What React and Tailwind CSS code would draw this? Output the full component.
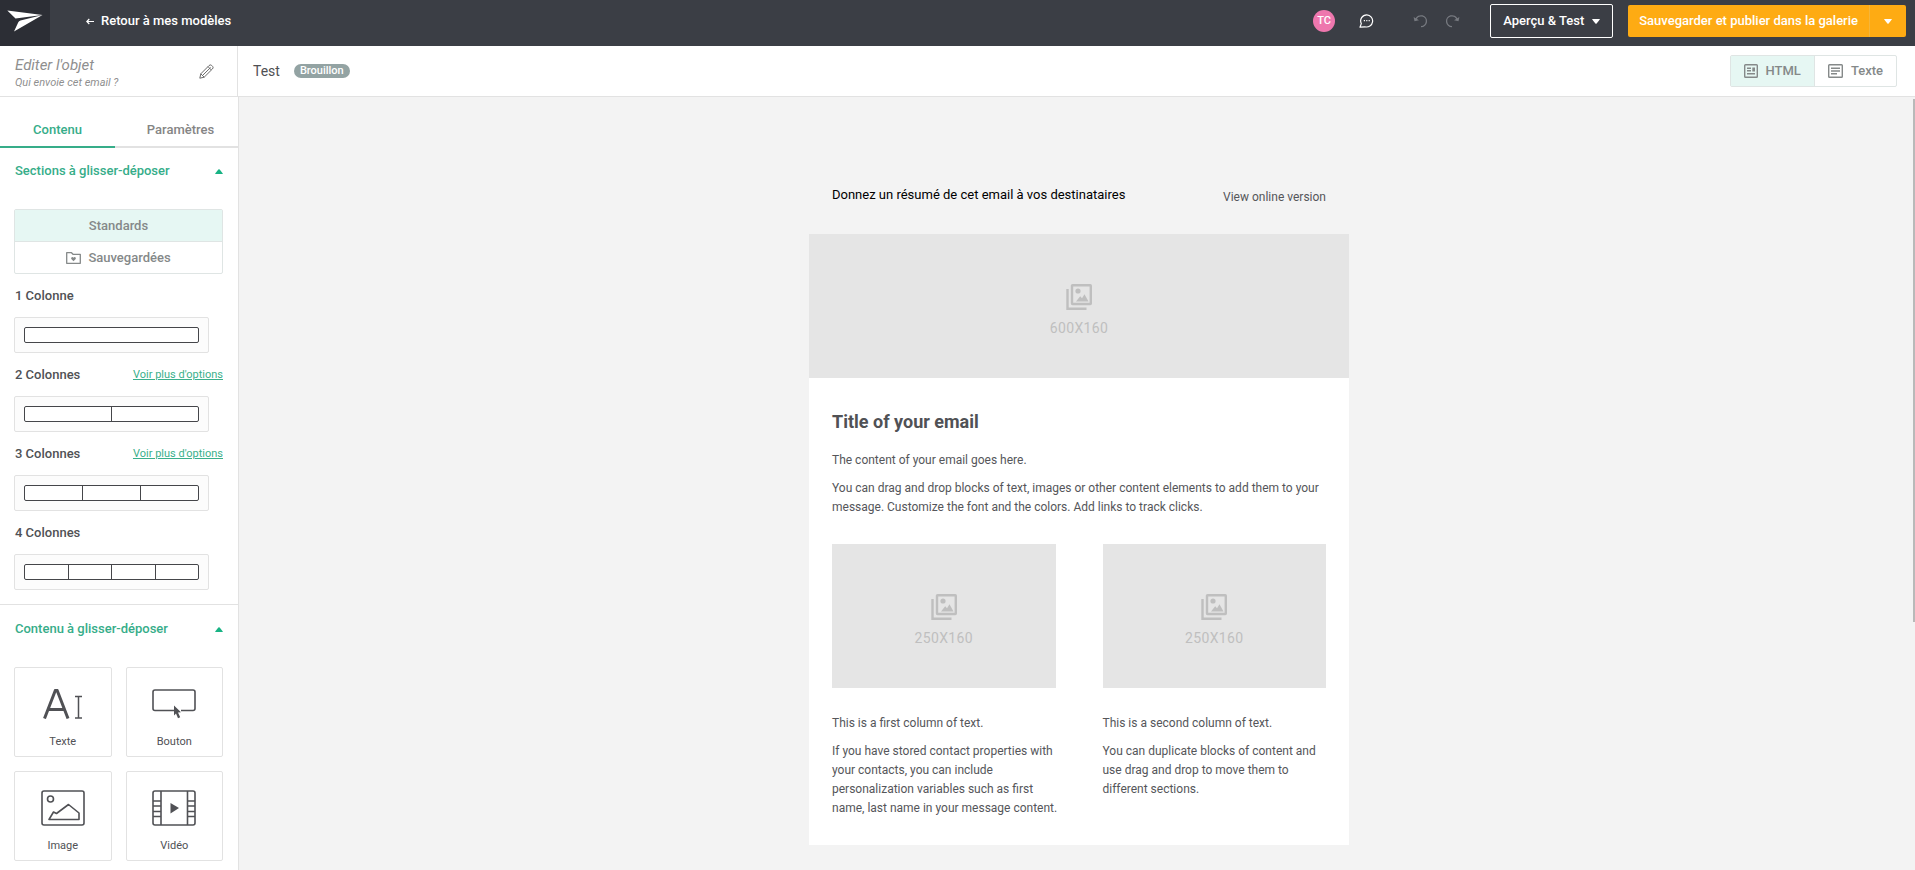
import React from "react";

const caretUp = (
  <svg width="8" height="5" viewBox="0 0 8 5" aria-hidden="true" fill="currentColor">
    <path d="M0.3 5Q0 5 .4 4.300L3.300 .6Q4 0 4.700 .6L7.600 4.300Q8 5 7.700 5Z" />
  </svg>
);

function CaretDown({ className = "" }) {
  return (
    <svg className={className} width="8" height="5" viewBox="0 0 8 5" aria-hidden="true" fill="currentColor">
      <path d="M0.3 0H7.7Q8 .3 7.6 .8L4.6 4.5Q4 5 3.4 4.5L.4 .8Q0 .3 .3 0Z" />
    </svg>
  );
}

function UndoIcon({ className = "" }) {
  return (
    <svg className={className} width="15" height="14" viewBox="0 0 15 14" fill="none" stroke="currentColor" strokeWidth="1.3" aria-hidden="true">
      <path d="M3 5.2A5.4 5.4 0 1 1 8 12.6" />
      <path d="M0.6 2.9 1.5 7.2 6 6.2Z" fill="currentColor" stroke="none" />
    </svg>
  );
}

function ImageStack() {
  return (
    <svg width="26" height="26" viewBox="0 0 26 26" fill="none" stroke="currentColor" strokeWidth="2.400" aria-hidden="true">
      <rect x="6" y="1.200" width="18.800" height="18.800" rx="0.5" />
      <path d="M1.500 5V24.800H20.500" />
      <circle cx="12" cy="7" r="2.6" fill="currentColor" stroke="none" />
      <path d="M10 17.500 14.200 12.300 16 14.300 18.500 10.300 22.500 17.500Z" fill="currentColor" stroke="none" />
    </svg>
  );
}

function Placeholder({ label }) {
  return (
    <div className="flex h-36 flex-col items-center justify-center gap-2 bg-[#e5e5e5] pt-[10px] text-[#bfbfbf]">
      <ImageStack />
      <span className="text-sm leading-5 tracking-wide">{label}</span>
    </div>
  );
}

function Header() {
  return (
    <header className="flex h-[46px] items-stretch bg-[#3b3e45] text-white">
      <a href="#accueil" aria-label="Accueil" className="flex w-[50px] justify-center bg-[#2c2e35] pt-[10px]">
        <svg width="36" height="22" viewBox="0 0 36 22" fill="#fff" aria-hidden="true">
          <path d="M0.300 0.500 35.500 5 18 7.200 8.500 8.500Z" />
          <path d="M35.500 5 7 21.500 11.300 12.300Q11.800 11 13.500 10.500Z" />
        </svg>
      </a>
      <div className="flex flex-1 items-center justify-between pr-[9px] pb-1 pl-9">
        <a href="#modeles" className="flex items-center gap-[7px] text-[13px] font-medium">
          <svg width="8" height="7" viewBox="0 0 8 7" fill="none" stroke="currentColor" strokeWidth="1.200" aria-hidden="true">
            <path d="M8 3.500H1M3.300 1 .8 3.500 3.300 6" />
          </svg>
          Retour à mes modèles
        </a>
        <div className="flex items-center">
          <span className="flex size-[22px] items-center justify-center rounded-full bg-[#ee77ae] text-[11px] font-medium">TC</span>
          <button type="button" aria-label="Commentaires" className="ml-6">
            <svg width="15" height="14" viewBox="0 0 15 14" fill="none" stroke="currentColor" strokeWidth="1.200" aria-hidden="true">
              <path d="M7.800 .8A6.100 6.100 0 1 1 6 12.800L1 13.200 2.300 9.600A6.100 6.100 0 0 1 7.800 .8Z" strokeLinejoin="round" />
              <path d="M4.800 6.600h1.200M7.200 6.600h1.200M9.600 6.600h1.200" />
            </svg>
          </button>
          <button type="button" aria-label="Annuler" className="ml-[39px] text-[#777a80]"><UndoIcon /></button>
          <button type="button" aria-label="Rétablir" className="ml-[17px] text-[#777a80]"><UndoIcon className="-scale-x-100" /></button>
          <button type="button" className="ml-[30px] flex h-[34px] items-center gap-2 rounded-[2px] border border-white px-3 text-[13px] font-medium">
            Aperçu &amp; Test
            <CaretDown />
          </button>
          <div className="ml-[15px] flex h-8 overflow-hidden rounded-[2px] bg-[#feab13] text-[13px] font-medium">
            <button type="button" className="px-[11px]">Sauvegarder et publier dans la galerie</button>
            <button type="button" aria-label="Autres options" className="flex w-[37px] items-center justify-center border-l border-[#f5b53a]">
              <CaretDown />
            </button>
          </div>
        </div>
      </div>
    </header>
  );
}

function TitleBar() {
  return (
    <div className="flex h-[51px] border-b border-[#e2e2e2] bg-white">
      <div className="flex w-[238px] items-center justify-between border-r border-[#e2e2e2] pr-[23px] pl-[15px]">
        <div className="pt-[3px] text-[#8f8f8f] italic">
          <p className="text-[15px] leading-5">Editer l'objet</p>
          <p className="text-[11px] leading-4">Qui envoie cet email ?</p>
        </div>
        <button type="button" aria-label="Modifier l'objet" className="text-[#6b6b6b]">
          <svg width="15" height="15" viewBox="0 0 15 15" fill="none" stroke="currentColor" strokeWidth="1" strokeLinejoin="round" aria-hidden="true">
            <path d="M.8 14.200 1.800 9.800 10 1.600Q11.200 .3 12.500 1.300L13.700 2.500Q14.700 3.800 13.400 5L5.200 13.200Z" />
            <path d="M1.800 9.800 5.200 13.200M3.600 11.400 11.600 3.500M9 2.600 12.400 6" />
          </svg>
        </button>
      </div>
      <div className="flex flex-1 items-center justify-between pr-[18px] pl-[15px]">
        <div className="flex items-center gap-[14px]">
          <h1 className="text-sm text-[#4f5054]">Test</h1>
          <span className="rounded-full bg-[#93a3a3] px-[6px] text-[11px] leading-[14px] font-medium text-white">Brouillon</span>
        </div>
        <div className="flex h-8 rounded-[2px] border border-[#dfe5e4] text-[13px] font-medium text-[#858989]">
          <button type="button" className="flex items-center gap-2 border-r border-[#dfe5e4] bg-[#e6f7f3] px-[13px]">
            <svg width="14" height="14" viewBox="0 0 14 14" fill="none" stroke="currentColor" strokeWidth="1.400" aria-hidden="true">
              <rect x=".7" y=".7" width="12.600" height="12.600" rx=".8" />
              <path d="M3 4.200h4M3 6.800h4M3 9.800h8" />
              <path d="M8.300 3.500h2.700v4h-2.700z" fill="currentColor" stroke="none" />
            </svg>
            HTML
          </button>
          <button type="button" className="flex items-center gap-2 px-[13px]">
            <svg width="15" height="14" viewBox="0 0 15 14" fill="none" stroke="currentColor" strokeWidth="1.400" aria-hidden="true">
              <rect x=".7" y=".7" width="13.600" height="12.600" rx=".8" />
              <path d="M3 4.200h9M3 7h9M3 9.800h6" />
            </svg>
            Texte
          </button>
        </div>
      </div>
    </div>
  );
}

function LayoutRow({ title, columns, more }) {
  return (
    <div className="mb-3 flex flex-col gap-[11px]">
      <div className="flex h-5 items-center justify-between pl-px text-[#505155]">
        <h3 className="text-[13px] font-medium">{title}</h3>
        {more && <a href="#options" className="text-[11px] text-[#3aaf8b] underline">Voir plus d'options</a>}
      </div>
      <button type="button" aria-label={title} className="mr-[14px] rounded-[2px] border border-[#e2e2e2] bg-[#fcfcfc] px-[9px] py-[9px]">
        <span className="flex h-4 divide-x divide-[#45464a] rounded-[2px] border border-[#45464a] bg-white">
          {Array.from({ length: columns }, (_, i) => (
            <span key={i} className="flex-1" />
          ))}
        </span>
      </button>
    </div>
  );
}

function Tile({ label, children }) {
  return (
    <button type="button" className="flex h-[90px] flex-col items-center rounded-[2px] border border-[#e2e2e2] bg-white pt-[18px] text-[#505155]">
      <span className="flex h-9 items-center">{children}</span>
      <span className="mt-3 text-[11px] leading-4">{label}</span>
    </button>
  );
}

function SectionTitle({ children }) {
  return (
    <button type="button" className="flex h-5 w-full items-center justify-between pl-px text-[13px] font-medium text-[#36ad89]">
      {children}
      <span className="text-[#18b384]">{caretUp}</span>
    </button>
  );
}

function Sidebar() {
  return (
    <aside className="w-[239px] shrink-0 border-r border-[#e2e2e2] bg-white">
      <nav className="flex pt-4 text-[13px] font-medium">
        <button type="button" className="h-[35px] w-[115px] border-b-2 border-[#36ad89] pt-px text-[#36ad89]">Contenu</button>
        <button type="button" className="h-[35px] flex-1 border-b-2 border-[#e2e2e2] pt-px pl-2 text-[#858585]">Paramètres</button>
      </nav>
      <section className="border-b border-[#e2e2e2] pt-[13px] pr-[15px] pb-[2px] pl-[14px]">
        <SectionTitle>Sections à glisser-déposer</SectionTitle>
        <div className="mt-7 mb-3 flex flex-col rounded-[2px] border border-[#dfe5e4] text-[13px] font-medium text-[#858989]">
          <button type="button" className="h-8 border-b border-[#dfe5e4] bg-[#e6f7f3]">Standards</button>
          <button type="button" className="flex h-[31px] items-center justify-center gap-[7px]">
            <svg width="15" height="12" viewBox="0 0 15 12" fill="none" stroke="currentColor" strokeWidth="1.300" aria-hidden="true">
              <path d="M.7 .7H5.500L7 2.300H14.300V11.300H.7Z" strokeLinejoin="round" />
              <path d="M7.500 9.300 5.300 7Q4.700 5.900 5.700 5.200 6.800 4.700 7.500 5.700 8.200 4.700 9.300 5.200 10.300 5.900 9.700 7Z" fill="currentColor" stroke="none" />
            </svg>
            Sauvegardées
          </button>
        </div>
        <LayoutRow title="1 Colonne" columns={1} />
        <LayoutRow title="2 Colonnes" columns={2} more />
        <LayoutRow title="3 Colonnes" columns={3} more />
        <LayoutRow title="4 Colonnes" columns={4} />
      </section>
      <section className="pt-[14px] pr-[15px] pb-[10px] pl-[14px]">
        <SectionTitle>Contenu à glisser-déposer</SectionTitle>
        <div className="mt-7 grid grid-cols-2 gap-[14px]">
          <Tile label="Texte">
            <svg width="40" height="30" viewBox="0 0 40 30" fill="none" stroke="currentColor" aria-hidden="true">
              <path d="M1.500 29.500 12.500 1H14L25 29.500M5.500 20.500H21" strokeWidth="3" strokeLinejoin="bevel" />
              <path d="M32 7.500H39M32 29H39M35.500 7.500V29" strokeWidth="1.500" />
            </svg>
          </Tile>
          <Tile label="Bouton">
            <svg width="44" height="30" viewBox="0 0 44 30" fill="none" stroke="currentColor" strokeWidth="1.600" aria-hidden="true">
              <path d="M22 21.500H3Q1 21.500 1 19.500V3Q1 1 3 1H41Q43 1 43 3V19.500Q43 21.500 41 21.500H29" />
              <path d="M22 16.500 29 23.200 26 23.500 28.200 28.300 26 29.300 24 24.600 22 26.500Z" fill="currentColor" stroke="none" />
            </svg>
          </Tile>
          <Tile label="Image">
            <svg width="44" height="36" viewBox="0 0 44 36" fill="none" stroke="currentColor" strokeWidth="1.600" strokeLinejoin="round" aria-hidden="true">
              <rect x="1" y="1" width="42" height="34" rx="2" />
              <circle cx="9.500" cy="9" r="3" />
              <path d="M8 29.500 12.500 22 15.500 23.500 27.500 14.500 38 23V29.500Z" />
            </svg>
          </Tile>
          <Tile label="Vidéo">
            <svg width="44" height="36" viewBox="0 0 44 36" fill="none" stroke="currentColor" strokeWidth="1.600" aria-hidden="true">
              <rect x="1" y="1" width="42" height="34" rx="2" />
              <path d="M9 1V35M35.500 1V35M1 11H9M1 16H9M1 21.500H9M1 26.500H9M35.500 11H43M35.500 16H43M35.500 21.500H43M35.500 26.500H43" />
              <path d="M18.500 13 27 18 18.500 23.500Z" fill="currentColor" stroke="none" />
            </svg>
          </Tile>
        </div>
      </section>
    </aside>
  );
}

function EmailColumn({ intro, children }) {
  return (
    <div>
      <Placeholder label="250X160" />
      <div className="-mr-2 flex flex-col gap-[9px] pt-[26px]">
        <p>{intro}</p>
        <p>{children}</p>
      </div>
    </div>
  );
}

function Canvas() {
  return (
    <main className="relative flex-1 bg-[#f3f3f3] pt-[88px] pb-6 pl-1">
      <div className="mx-auto max-w-[540px] text-xs leading-[19px] text-[#55565a]">
        <div className="flex items-start justify-between px-[23px] pb-[27px]">
          <p className="text-[13px] text-black">Donnez un résumé de cet email à vos destinataires</p>
          <a href="#online" className="pt-[3px]">View online version</a>
        </div>
        <Placeholder label="600X160" />
        <article className="bg-white px-[23px] pb-[27px]">
          <div className="flex flex-col gap-[9px] pt-8 pb-[27px]">
            <h2 className="text-lg leading-6 font-bold text-[#505155]">Title of your email</h2>
            <p className="pt-2">The content of your email goes here.</p>
            <p>You can drag and drop blocks of text, images or other content elements to add them to your message. Customize the font and the colors. Add links to track clicks.</p>
          </div>
          <div className="grid grid-cols-2 gap-[47px]">
            <EmailColumn intro="This is a first column of text.">
              If you have stored contact properties with your contacts, you can include personalization variables such as first name, last name in your message content.
            </EmailColumn>
            <EmailColumn intro="This is a second column of text.">
              You can duplicate blocks of content and use drag and drop to move them to different sections.
            </EmailColumn>
          </div>
        </article>
      </div>
      <div className="absolute top-[2px] right-0 h-[523px] w-[2px] bg-[#b9b9b9]" />
    </main>
  );
}

export default function App() {
  return (
    <div className="flex min-h-screen flex-col bg-white font-['Roboto',sans-serif]">
      <Header />
      <TitleBar />
      <div className="flex flex-1">
        <Sidebar />
        <Canvas />
      </div>
    </div>
  );
}
